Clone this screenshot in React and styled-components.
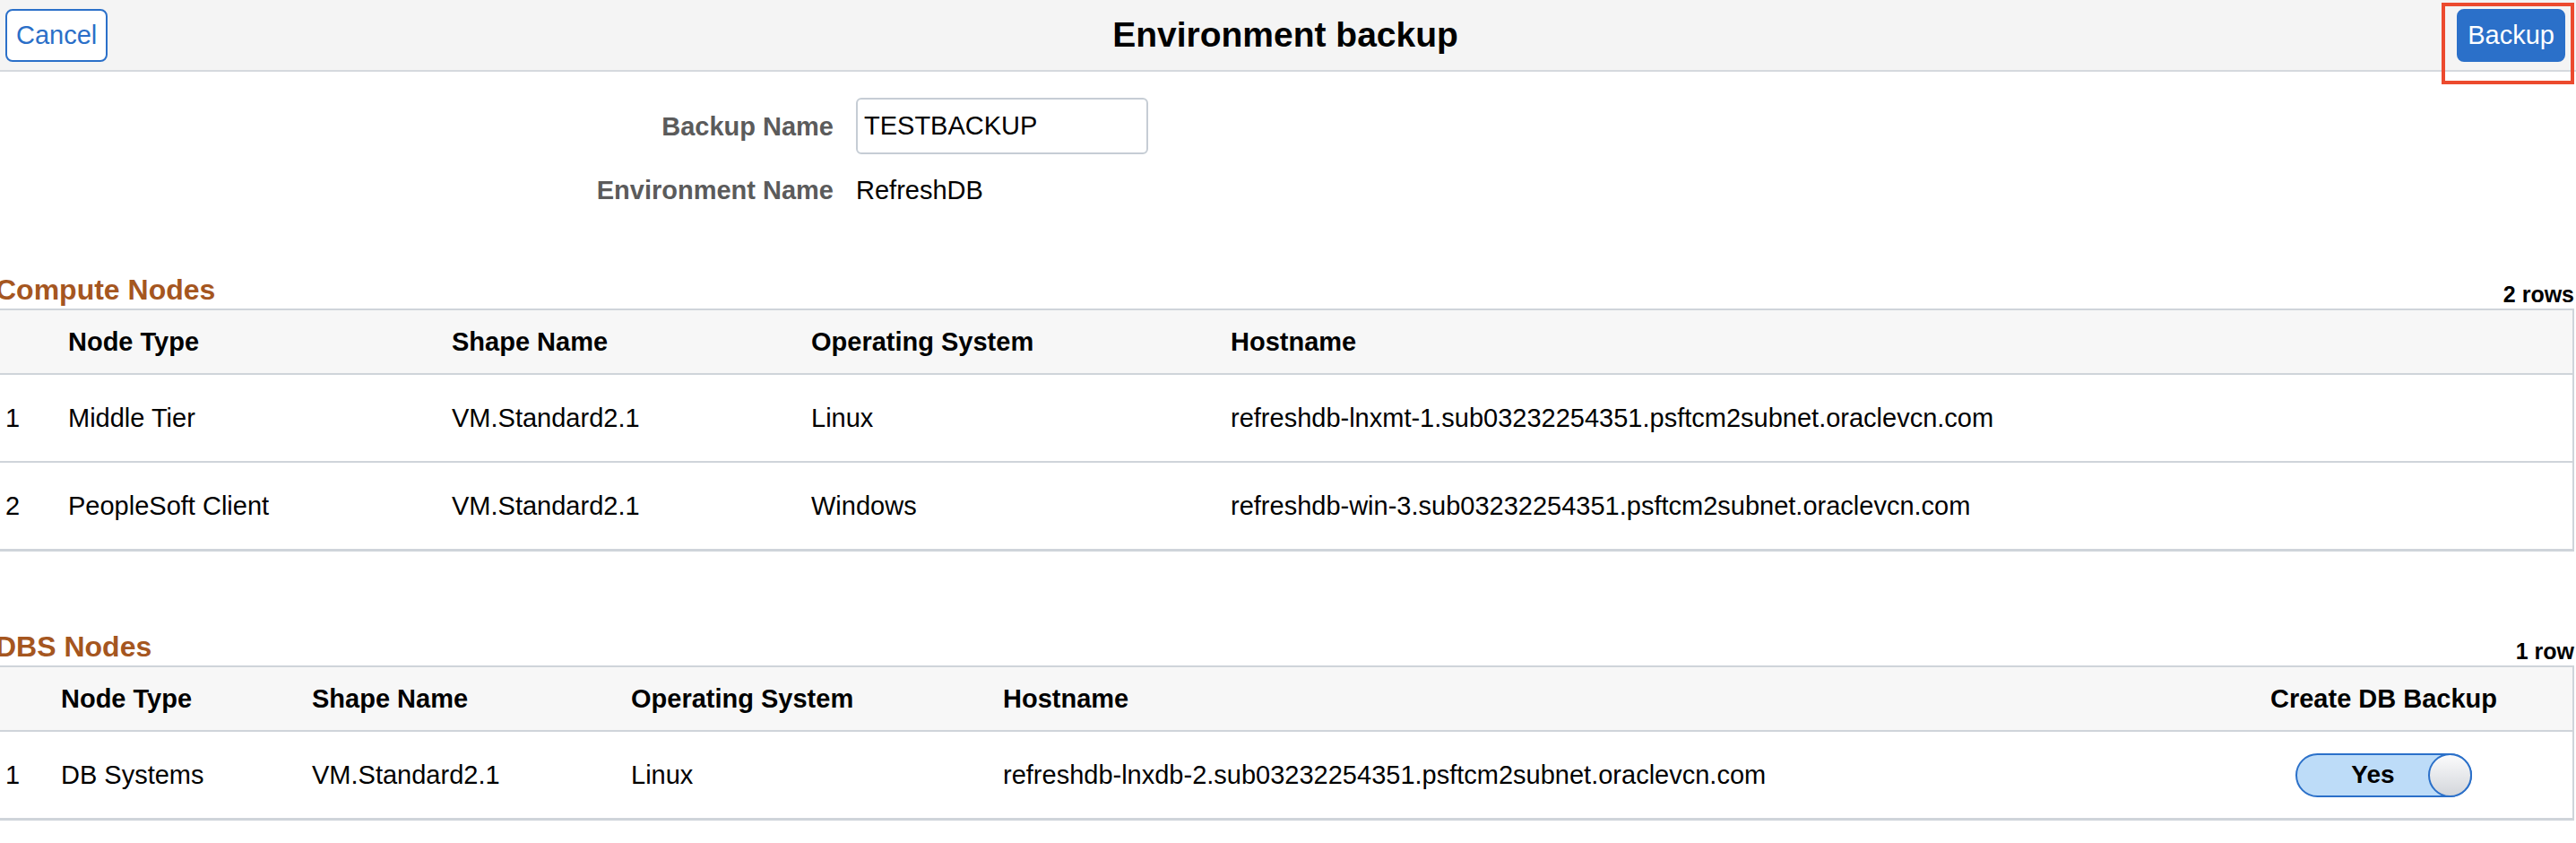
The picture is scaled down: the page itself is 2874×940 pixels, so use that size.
import React from 'react';
import styled, { createGlobalStyle } from 'styled-components';

const FONT = '"Liberation Sans", Arial, Helvetica, sans-serif';

const GlobalStyle = createGlobalStyle`
  html, body { margin: 0; padding: 0; background: #ffffff; }
  body { font-family: ${FONT}; color: #000; overflow: hidden; }
  * { box-sizing: border-box; }
`;

const Page = styled.div`
  width: 2874px;
  min-height: 940px;
`;

const Header = styled.header`
  display: grid;
  grid-template-columns: 1fr auto 1fr;
  align-items: center;
  height: 80px;
  padding: 0 12px 0 6px;
  background: #f4f4f4;
  border-bottom: 2px solid #d5d9de;
`;

const Title = styled.h1`
  margin: 0;
  justify-self: center;
  font-size: 39px;
  font-weight: bold;
  color: #000;
`;

const Button = styled.button`
  height: 59px;
  padding: 0 10px;
  font-family: ${FONT};
  font-size: 29px;
  border-radius: 8px;
  border: 2px solid #2b70c9;
  background: ${p => (p.$primary ? '#2b70c9' : '#ffffff')};
  color: ${p => (p.$primary ? '#ffffff' : '#2b6fc8')};
  cursor: pointer;
`;

const Start = styled.div`
  justify-self: start;
`;

const End = styled.div`
  justify-self: end;
  position: relative;
  display: flex;
`;

const Highlight = styled.span`
  position: absolute;
  left: -17px;
  top: -7px;
  width: 148px;
  height: 91px;
  border: 4px solid #ec4a2e;
  pointer-events: none;
`;

const Form = styled.div`
  display: grid;
  grid-template-columns: 930px 326px;
  column-gap: 25px;
  row-gap: 23px;
  align-items: center;
  margin-top: 29px;
`;

const Label = styled.div`
  justify-self: end;
  font-size: 29px;
  line-height: 34px;
  font-weight: bold;
  color: #5b5b5b;
`;

const Input = styled.input`
  width: 326px;
  height: 63px;
  padding: 0 7px;
  border: 2px solid #c6cdd5;
  border-radius: 6px;
  font-family: ${FONT};
  font-size: 29px;
  color: #000;
  background: #fff;
  outline: none;
`;

const Value = styled.div`
  font-size: 29px;
  line-height: 34px;
  color: #000;
`;

const Section = styled.section`
  margin-top: ${p => p.$gap}px;
`;

const SectionHead = styled.div`
  display: flex;
  justify-content: space-between;
  align-items: flex-end;
  height: 36px;
  padding-right: 2px;
`;

const SectionTitle = styled.h2`
  margin: 0 0 0 -5px;
  font-size: 32px;
  line-height: 36px;
  font-weight: bold;
  color: #a5561f;
`;

const RowCount = styled.span`
  font-size: 25px;
  line-height: 26px;
  font-weight: bold;
  color: #000;
`;

const TableBox = styled.div`
  margin: 3px 2px 0 -2px;
  border: 2px solid #cfd4da;
  border-bottom-width: 3px;
`;

const Row = styled.div`
  box-sizing: content-box;
  display: grid;
  grid-template-columns: ${p => p.$cols};
  align-items: center;
  height: ${p => (p.$head ? 70 : 96)}px;
  background: ${p => (p.$head ? '#f7f7f7' : '#ffffff')};
  font-size: 29px;
  font-weight: ${p => (p.$head ? 'bold' : 'normal')};
  &:not(:last-child) {
    border-bottom: 2px solid #cfd4da;
  }
`;

const Cell = styled.div`
  padding-left: ${p => p.$pad || 0}px;
  text-align: ${p => p.$align || 'left'};
  white-space: nowrap;
`;

const Toggle = styled.div`
  display: inline-flex;
  align-items: center;
  width: 197px;
  height: 49px;
  border: 2px solid #2b70c9;
  border-radius: 25px;
  background: #bddcf8;
  vertical-align: middle;
`;

const ToggleLabel = styled.span`
  flex: 1;
  padding-left: 23px;
  text-align: center;
  font-size: 28px;
  font-weight: bold;
  color: #000;
`;

const Knob = styled.span`
  flex: none;
  width: 49px;
  height: 49px;
  margin: -2px -2px -2px 0;
  border: 2px solid #2b70c9;
  border-radius: 50%;
  background: linear-gradient(#fbfbfc, #d3d6db);
`;

const computeCols = '76px 428px 401px 468px 1fr';
const dbsCols = '68px 280px 356px 415px 1fr 421px';

const computeRows = [
  ['1', 'Middle Tier', 'VM.Standard2.1', 'Linux', 'refreshdb-lnxmt-1.sub03232254351.psftcm2subnet.oraclevcn.com'],
  ['2', 'PeopleSoft Client', 'VM.Standard2.1', 'Windows', 'refreshdb-win-3.sub03232254351.psftcm2subnet.oraclevcn.com'],
];

export default function App() {
  return (
    <Page>
      <GlobalStyle />
      <Header>
        <Start>
          <Button>Cancel</Button>
        </Start>
        <Title>Environment backup</Title>
        <End>
          <Button $primary>Backup</Button>
          <Highlight />
        </End>
      </Header>

      <Form>
        <Label>Backup Name</Label>
        <Input defaultValue="TESTBACKUP" />
        <Label>Environment Name</Label>
        <Value>RefreshDB</Value>
      </Form>

      <Section $gap={76}>
        <SectionHead>
          <SectionTitle>Compute Nodes</SectionTitle>
          <RowCount>2 rows</RowCount>
        </SectionHead>
        <TableBox>
          <Row $head $cols={computeCols}>
            <Cell />
            <Cell>Node Type</Cell>
            <Cell>Shape Name</Cell>
            <Cell>Operating System</Cell>
            <Cell>Hostname</Cell>
          </Row>
          {computeRows.map(r => (
            <Row key={r[0]} $cols={computeCols}>
              <Cell $pad={6}>{r[0]}</Cell>
              <Cell>{r[1]}</Cell>
              <Cell>{r[2]}</Cell>
              <Cell>{r[3]}</Cell>
              <Cell>{r[4]}</Cell>
            </Row>
          ))}
        </TableBox>
      </Section>

      <Section $gap={88}>
        <SectionHead>
          <SectionTitle>DBS Nodes</SectionTitle>
          <RowCount>1 row</RowCount>
        </SectionHead>
        <TableBox>
          <Row $head $cols={dbsCols}>
            <Cell />
            <Cell>Node Type</Cell>
            <Cell>Shape Name</Cell>
            <Cell>Operating System</Cell>
            <Cell>Hostname</Cell>
            <Cell $align="center">Create DB Backup</Cell>
          </Row>
          <Row $cols={dbsCols}>
            <Cell $pad={6}>1</Cell>
            <Cell>DB Systems</Cell>
            <Cell>VM.Standard2.1</Cell>
            <Cell>Linux</Cell>
            <Cell>refreshdb-lnxdb-2.sub03232254351.psftcm2subnet.oraclevcn.com</Cell>
            <Cell $align="center">
              <Toggle>
                <ToggleLabel>Yes</ToggleLabel>
                <Knob />
              </Toggle>
            </Cell>
          </Row>
        </TableBox>
      </Section>
    </Page>
  );
}
